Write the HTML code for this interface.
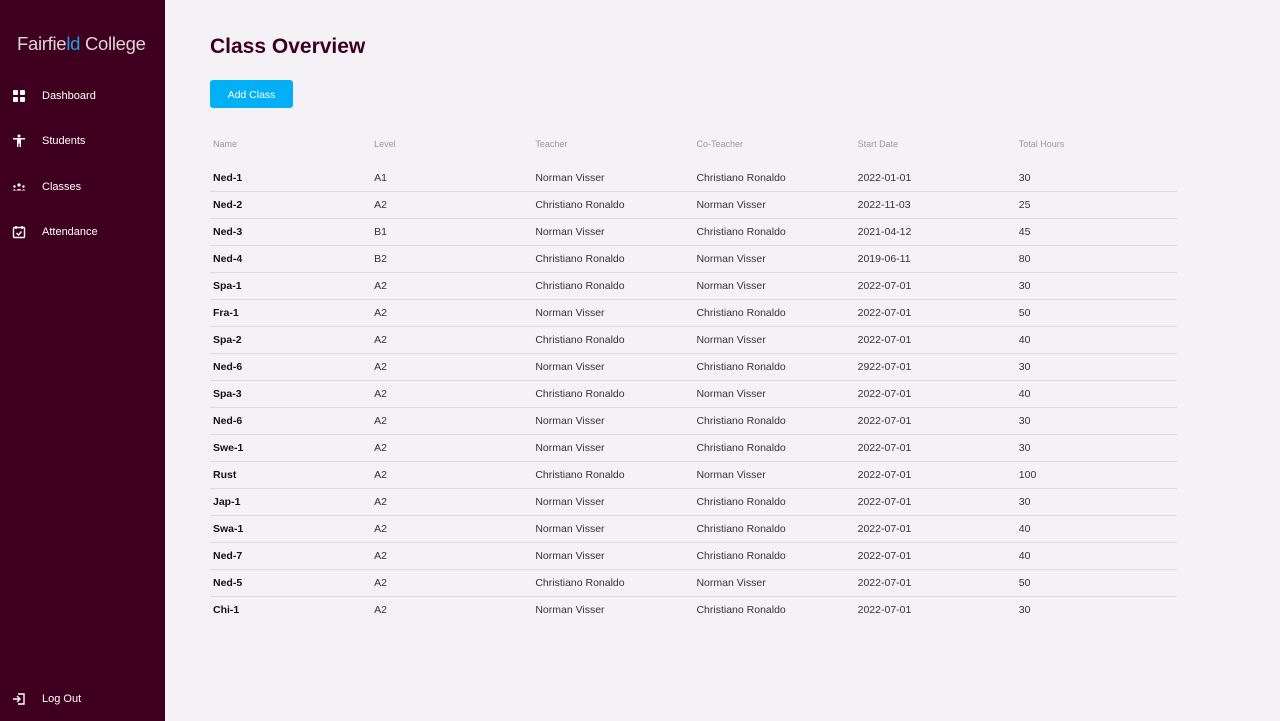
<!DOCTYPE html>
<html><head><style>
body{margin:0;width:1280px;height:721px;background:#f4f2f7;font-family:"Liberation Sans",sans-serif;position:relative;overflow:hidden}
.side{position:absolute;left:0;top:0;width:165px;height:721px;background:#3f0020;color:#fff}
.logo{position:absolute;left:17px;top:33px;font-size:18.5px;color:#ddd3d8;letter-spacing:-0.3px}
.logo b{font-weight:normal;color:#1aa0e0}
.nav{position:absolute;left:12px;font-size:11px;display:flex;align-items:center}
.nav svg{width:14px;height:14px;margin-right:16px}
h1{position:absolute;left:210px;top:35px;margin:0;font-size:21px;color:#3f0020;font-weight:bold}
.btn{position:absolute;left:210px;top:80px;width:83px;height:28px;background:#03b0f5;border-radius:3px;color:#fff;font-size:10.5px;text-align:center;line-height:30px}
table{position:absolute;left:210px;top:133px;border-collapse:collapse;width:967px;font-size:10.5px;color:#333}
th{color:#999;font-weight:normal;font-size:9px;text-align:left;height:22px;padding:0 3px;width:155px}
td{height:26px;padding:0 3px;border-bottom:1px solid #dedce2}
tbody tr:first-child td{padding-top:10px;height:26px}
tbody tr:last-child td{border-bottom:none}
td:first-child{font-weight:bold;color:#111}
</style></head><body>
<div class="side">
<div class="logo">Fairfie<b>ld</b> College</div>
<div class="nav" style="top:89px"><svg viewBox="0 0 14 14" fill="#fff"><rect x="1" y="1" width="5" height="5" rx="1"/><rect x="8" y="1" width="5" height="5" rx="1"/><rect x="1" y="8" width="5" height="5" rx="1"/><rect x="8" y="8" width="5" height="5" rx="1"/></svg>Dashboard</div>
<div class="nav" style="top:134px"><svg viewBox="0 0 14 14" fill="#fff"><circle cx="7" cy="2" r="1.5"/><path d="M1 4h12v1.5H9V13H7.6V9.5H6.4V13H5V5.5H1z"/></svg>Students</div>
<div class="nav" style="top:180px"><svg viewBox="0 0 14 14" fill="#fff"><circle cx="7" cy="5" r="1.6"/><circle cx="2.5" cy="6.5" r="1.2"/><circle cx="11.5" cy="6.5" r="1.2"/><path d="M4 10.5q3-3 6 0zM0.5 10.5q2-2.5 3.5 0zM10 10.5q1.5-2.5 3.5 0z"/></svg>Classes</div>
<div class="nav" style="top:225px"><svg viewBox="0 0 14 14" fill="none" stroke="#fff" stroke-width="1.4"><rect x="1.5" y="2.5" width="11" height="10" rx="1"/><path d="M4 1v3M10 1v3M4.5 8l2 2 3-3.5"/></svg>Attendance</div>
<div class="nav" style="top:692px"><svg viewBox="0 0 14 14" fill="none" stroke="#fff" stroke-width="1.4"><path d="M6 2H12V12H6M1 7h7M5 4l3 3-3 3"/></svg>Log Out</div>
</div>
<h1>Class Overview</h1>
<div class="btn">Add Class</div>
<table><thead><tr><th>Name</th><th>Level</th><th>Teacher</th><th>Co-Teacher</th><th>Start Date</th><th>Total Hours</th></tr></thead><tbody>
<tr><td>Ned-1</td><td>A1</td><td>Norman Visser</td><td>Christiano Ronaldo</td><td>2022-01-01</td><td>30</td></tr>
<tr><td>Ned-2</td><td>A2</td><td>Christiano Ronaldo</td><td>Norman Visser</td><td>2022-11-03</td><td>25</td></tr>
<tr><td>Ned-3</td><td>B1</td><td>Norman Visser</td><td>Christiano Ronaldo</td><td>2021-04-12</td><td>45</td></tr>
<tr><td>Ned-4</td><td>B2</td><td>Christiano Ronaldo</td><td>Norman Visser</td><td>2019-06-11</td><td>80</td></tr>
<tr><td>Spa-1</td><td>A2</td><td>Christiano Ronaldo</td><td>Norman Visser</td><td>2022-07-01</td><td>30</td></tr>
<tr><td>Fra-1</td><td>A2</td><td>Norman Visser</td><td>Christiano Ronaldo</td><td>2022-07-01</td><td>50</td></tr>
<tr><td>Spa-2</td><td>A2</td><td>Christiano Ronaldo</td><td>Norman Visser</td><td>2022-07-01</td><td>40</td></tr>
<tr><td>Ned-6</td><td>A2</td><td>Norman Visser</td><td>Christiano Ronaldo</td><td>2922-07-01</td><td>30</td></tr>
<tr><td>Spa-3</td><td>A2</td><td>Christiano Ronaldo</td><td>Norman Visser</td><td>2022-07-01</td><td>40</td></tr>
<tr><td>Ned-6</td><td>A2</td><td>Norman Visser</td><td>Christiano Ronaldo</td><td>2022-07-01</td><td>30</td></tr>
<tr><td>Swe-1</td><td>A2</td><td>Norman Visser</td><td>Christiano Ronaldo</td><td>2022-07-01</td><td>30</td></tr>
<tr><td>Rust</td><td>A2</td><td>Christiano Ronaldo</td><td>Norman Visser</td><td>2022-07-01</td><td>100</td></tr>
<tr><td>Jap-1</td><td>A2</td><td>Norman Visser</td><td>Christiano Ronaldo</td><td>2022-07-01</td><td>30</td></tr>
<tr><td>Swa-1</td><td>A2</td><td>Norman Visser</td><td>Christiano Ronaldo</td><td>2022-07-01</td><td>40</td></tr>
<tr><td>Ned-7</td><td>A2</td><td>Norman Visser</td><td>Christiano Ronaldo</td><td>2022-07-01</td><td>40</td></tr>
<tr><td>Ned-5</td><td>A2</td><td>Christiano Ronaldo</td><td>Norman Visser</td><td>2022-07-01</td><td>50</td></tr>
<tr><td>Chi-1</td><td>A2</td><td>Norman Visser</td><td>Christiano Ronaldo</td><td>2022-07-01</td><td>30</td></tr>
</tbody></table>
</body></html>
